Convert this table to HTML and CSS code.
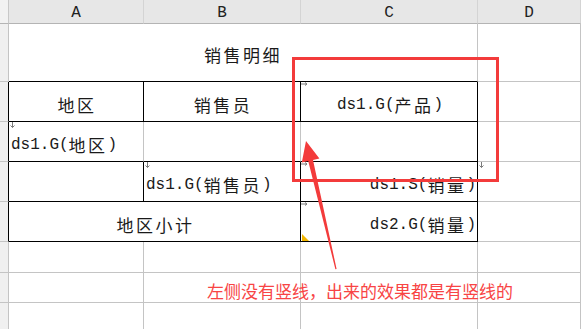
FILE: index.html
```html
<!DOCTYPE html>
<html lang="zh">
<head>
<meta charset="utf-8">
<title>销售明细</title>
<link rel="stylesheet" href="styles.css">
</head>
<body>
<div class="sheet">
  <div class="grid">
    <div class="c corner"></div>
    <div class="c colh">A</div>
    <div class="c colh">B</div>
    <div class="c colh">C</div>
    <div class="c colh">D</div>

    <div class="c rowh"></div>
    <div class="c title span3 bb"><span class="zh">销售明细</span></div>
    <div class="c"></div>

    <div class="c rowh bl"></div>
    <div class="c ctr br bb"><span class="zh">地区</span></div>
    <div class="c ctr br bb"><span class="zh">销售员</span></div>
    <div class="c ctr br bb"><svg class="mk mk-r" width="7" height="4" viewBox="0 0 7 4"><path d="M0 2H6M4 0.5L6 2L4 3.5" fill="none" stroke="#7a7a7a"/></svg><span>ds1.G(</span><span class="zh">产品</span><span>)</span></div>
    <div class="c"></div>

    <div class="c rowh bl"></div>
    <div class="c left bb"><svg class="mk mk-d" width="5" height="6" viewBox="0 0 5 6"><path d="M2.5 0V5.5M0.5 3.5L2.5 5.5L4.5 3.5" fill="none" stroke="#7a7a7a"/></svg><span>ds1.G(</span><span class="zh">地区</span><span>)</span></div>
    <div class="c bb"></div>
    <div class="c br bb"></div>
    <div class="c"></div>

    <div class="c rowh bl"></div>
    <div class="c br bb"></div>
    <div class="c left br bb"><svg class="mk mk-d" width="5" height="6" viewBox="0 0 5 6"><path d="M2.5 0V5.5M0.5 3.5L2.5 5.5L4.5 3.5" fill="none" stroke="#7a7a7a"/></svg><span>ds1.G(</span><span class="zh">销售员</span><span>)</span></div>
    <div class="c right br bb"><svg class="mk mk-r" width="7" height="4" viewBox="0 0 7 4"><path d="M0 2H6M4 0.5L6 2L4 3.5" fill="none" stroke="#7a7a7a"/></svg><span>ds1.S(</span><span class="zh">销量</span><span>)</span></div>
    <div class="c"><svg class="mk mk-d" width="5" height="6" viewBox="0 0 5 6"><path d="M2.5 0V5.5M0.5 3.5L2.5 5.5L4.5 3.5" fill="none" stroke="#7a7a7a"/></svg></div>

    <div class="c rowh bl"></div>
    <div class="c ctr span2 br bb"><span class="zh">地区小计</span></div>
    <div class="c right br bb"><svg class="mk mk-r" width="7" height="4" viewBox="0 0 7 4"><path d="M0 2H6M4 0.5L6 2L4 3.5" fill="none" stroke="#7a7a7a"/></svg><span>ds2.G(</span><span class="zh">销量</span><span>)</span><span class="flag"></span></div>
    <div class="c"></div>

    <div class="c rowh"></div>
    <div class="c"></div>
    <div class="c"></div>
    <div class="c"></div>
    <div class="c"></div>

    <div class="c rowh"></div>
    <div class="c"></div>
    <div class="c"></div>
    <div class="c"></div>
    <div class="c"></div>

    <div class="c rowh"></div>
    <div class="c"></div>
    <div class="c"></div>
    <div class="c"></div>
    <div class="c"></div>
  </div>

  <svg class="anno" width="581" height="329" viewBox="0 0 581 329">
    <rect x="293.5" y="58.5" width="204" height="122" fill="none" stroke="#f33b3b" stroke-width="3"/>
    <polygon points="306,141 319.4,158.4 313,159.9 336.6,269 335.4,269.2 308.2,161.1 301.8,162.5" fill="#f33b3b"/>
  </svg>
  <div class="note">左侧没有竖线，出来的效果都是有竖线的</div>
</div>
</body>
</html>
```

FILE: styles.css
```css
html, body {
  margin: 0;
  padding: 0;
  background: #ffffff;
}

.sheet {
  position: relative;
  width: 581px;
  height: 329px;
  overflow: hidden;
  background: #ffffff;
}

.grid {
  display: grid;
  grid-template-columns: 9px 135px 157px 177px 1fr;
  grid-template-rows: 24px 58px 40px 40px 40px 40px 31px 30px 30px;
  font-family: "Liberation Mono", "Noto Sans CJK SC", monospace;
  font-size: 16px;
  color: #1a1a1a;
}

.c {
  position: relative;
  box-sizing: border-box;
  border-right: 1px solid #c4c4c4;
  border-bottom: 1px solid #c4c4c4;
  display: flex;
  align-items: center;
  line-height: 20px;
  padding: 6px 2px 0 2px;
  white-space: nowrap;
}

.corner {
  background: #f2f2f2;
  border-right-color: #c8c8c8;
  border-bottom-color: #b4b4b4;
  padding: 0;
}

.colh {
  background: #e7e7e7;
  border-right-color: #d4d4d4;
  border-bottom-color: #b4b4b4;
  justify-content: center;
  font-family: "Liberation Mono", monospace;
  font-size: 16px;
  color: #222222;
  padding: 3px 0 0 0;
}

.rowh {
  background: #f0f0f0;
  padding: 0;
}

.zh {
  font-family: "Noto Sans CJK SC", sans-serif;
  font-size: 17px;
  letter-spacing: 2.5px;
}

.title {
  justify-content: center;
  padding-top: 4px;
}

.ctr {
  justify-content: center;
  padding-left: 4px;
}

.left {
  justify-content: flex-start;
}

.right {
  justify-content: flex-end;
  padding-right: 1px;
}

.span2 {
  grid-column: span 2;
}

.span3 {
  grid-column: span 3;
}

.br {
  border-right-color: #000000;
}

.bb {
  border-bottom-color: #000000;
}

.bl {
  border-right-color: #000000;
}

.mk {
  position: absolute;
  left: 0;
  top: 0;
}

.mk-d {
  left: 1px;
}

.flag {
  position: absolute;
  left: 1px;
  bottom: 0;
  width: 0;
  height: 0;
  border-left: 7px solid #f2b600;
  border-top: 7px solid transparent;
}

.anno {
  position: absolute;
  left: 0;
  top: 0;
  pointer-events: none;
}

.note {
  position: absolute;
  left: 207px;
  top: 281px;
  font-family: "Noto Sans CJK SC", sans-serif;
  font-size: 17px;
  line-height: 20px;
  color: #f84444;
  white-space: nowrap;
}
```
